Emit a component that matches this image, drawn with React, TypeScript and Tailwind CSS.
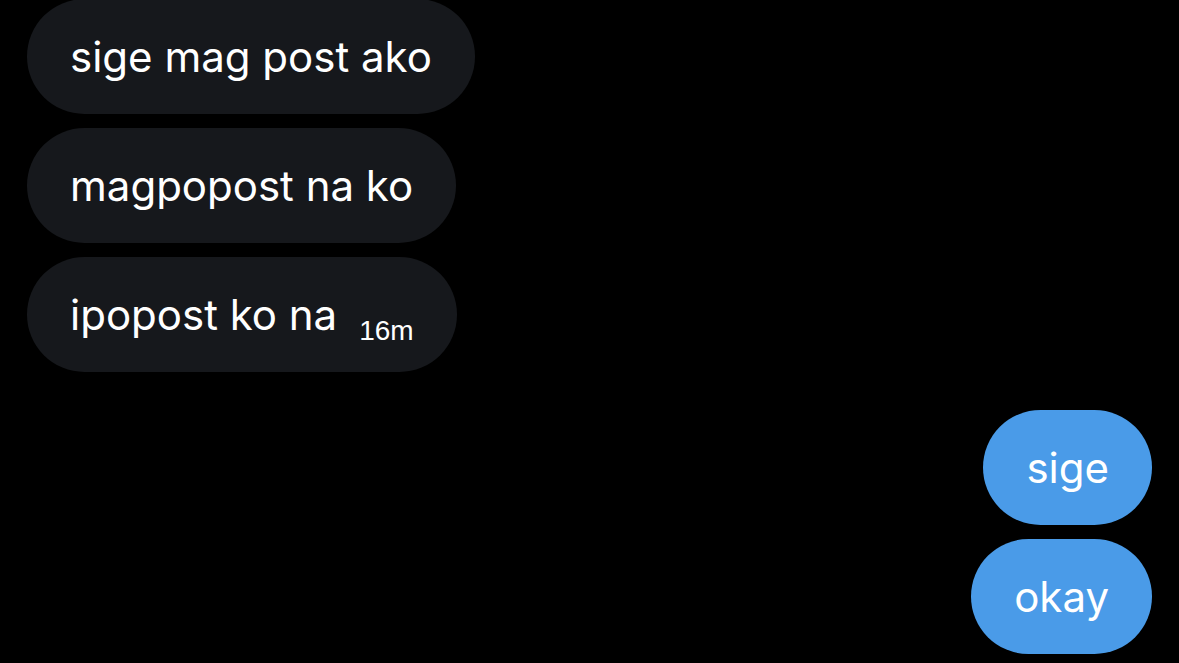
import React from 'react';

type Message = {
  text: string;
  mine?: boolean;
  time?: string;
};

const messages: Message[] = [
  { text: 'sige mag post ako' },
  { text: 'magpopost na ko' },
  { text: 'ipopost ko na', time: '16m' },
  { text: 'sige', mine: true },
  { text: 'okay', mine: true },
];

const Bubble: React.FC<{ msg: Message }> = ({ msg }) => (
  <div
    className={`flex h-[115px] items-center rounded-full px-[43px] text-[42px] leading-none text-white ${
      msg.mine ? 'self-end bg-[#4a9be8]' : 'self-start bg-[#16181c]'
    }`}
  >
    <span>{msg.text}</span>
    {msg.time && (
      <span className="ml-[22px] mt-[32px] font-['Liberation_Sans',sans-serif] text-[28px]">
        {msg.time}
      </span>
    )}
  </div>
);

export default function App() {
  return (
    <div className="h-[663px] w-[1179px] overflow-hidden bg-black font-['Inter',sans-serif]">
      <div className="-mt-px flex flex-col gap-[14px] px-[27px]">
        {messages.slice(0, 3).map((m, i) => (
          <Bubble key={i} msg={m} />
        ))}
        <div className="mt-[24px] flex flex-col gap-[14px]">
          {messages.slice(3).map((m, i) => (
            <Bubble key={i} msg={m} />
          ))}
        </div>
      </div>
    </div>
  );
}
